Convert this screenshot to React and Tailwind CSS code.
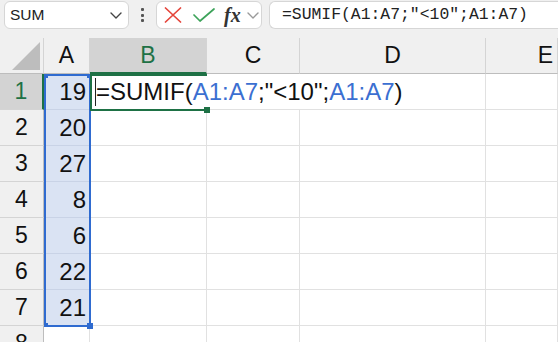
import React from 'react';

const rows = [19, 20, 27, 8, 6, 22, 21];
const cellFont = { fontFamily: '"Liberation Sans", Arial, sans-serif' };

function Chevron({ className }) {
  return (
    <svg className={className} width="12" height="7" viewBox="0 0 12 7" fill="none">
      <path d="M1 1l5 5 5-5" stroke="currentColor" strokeWidth="1.4" strokeLinecap="round" strokeLinejoin="round" />
    </svg>
  );
}

function Toolbar() {
  return (
    <div className="h-[38px] bg-[#f0f0f0] flex items-start pt-px pl-1 gap-0">
      <div className="w-[125px] h-[28px] bg-white border border-[#d6d6d6] rounded-md flex items-center pl-[5px] pr-[6px]">
        <span className="text-[15.5px] text-[#222] flex-1" style={cellFont}>SUM</span>
        <Chevron className="text-[#444]" />
      </div>
      <div className="w-[27px] h-[28px] flex flex-col items-center justify-center gap-[2.5px]">
        <div className="w-[3px] h-[3px] bg-[#555] rounded-[1px]" />
        <div className="w-[3px] h-[3px] bg-[#555] rounded-[1px]" />
        <div className="w-[3px] h-[3px] bg-[#555] rounded-[1px]" />
      </div>
      <div className="w-[106px] h-[28px] bg-white border border-[#d6d6d6] rounded-md flex items-center pl-[6px]">
        <svg width="18" height="16" viewBox="0 0 18 16" className="ml-px">
          <path d="M1.5 1l15 14M16.5 1l-15 14" stroke="#e5453b" strokeWidth="1.7" strokeLinecap="round" />
        </svg>
        <svg width="22" height="14" viewBox="0 0 22 14" className="ml-[11px]">
          <path d="M1 7l6 6L21 1" stroke="#3da35a" strokeWidth="1.7" fill="none" strokeLinecap="round" strokeLinejoin="round" />
        </svg>
        <span className="ml-[9px] text-[20px] italic font-bold text-[#333] leading-none" style={{ fontFamily: '"Liberation Serif", "Times New Roman", serif' }}>fx</span>
        <Chevron className="ml-[6px] text-[#9a9a9a]" />
      </div>
      <div className="ml-[7px] flex-1 h-[28px] bg-white border border-[#d6d6d6] border-r-0 rounded-l-md flex items-center pl-[12px]">
        <span className="text-[16.4px] text-[#222] whitespace-nowrap" style={{ fontFamily: '"Liberation Mono", "Courier New", monospace' }}>
          =SUMIF(A1:A7;"&lt;10";A1:A7)
        </span>
      </div>
    </div>
  );
}

function Sheet() {
  const head = 'bg-[#f0f0f0] border-b border-b-[#bdbdbd] border-r border-r-[#d4d4d4] flex items-center justify-center text-[23px] text-[#111]';
  const rowHead = 'bg-[#f0f0f0] border-r border-r-[#bdbdbd] border-b border-b-[#d4d4d4] flex items-center justify-center text-[23px] text-[#111]';
  const cell = 'border-r border-b border-[#e1e1e1]';
  const aCell = 'bg-[#dae3f3] border-b border-[#c9d3e6] flex items-center justify-end pr-[4px] text-[24px] text-[#111]';

  return (
    <div className="relative grid grid-cols-[44px_46px_117px_93px_186px_72px] grid-rows-[repeat(9,36px)]" style={cellFont}>
      <div className="bg-[#f0f0f0] border-b border-b-[#bdbdbd] border-r border-r-[#d4d4d4] flex items-end justify-end pr-[3px] pb-[3px]">
        <svg width="28" height="28" viewBox="0 0 28 28"><path d="M28 0V28H0z" fill="#bdbdbd" /></svg>
      </div>
      <div className={head}>A</div>
      <div className="bg-[#d3d3d3] border-b-2 border-b-[#1e7145] border-r border-r-[#d4d4d4] flex items-center justify-center text-[23px] text-[#1e7145]">B</div>
      <div className={head}>C</div>
      <div className={head}>D</div>
      <div className={head + ' justify-end pr-[4px]'}>E</div>

      {rows.map((v, i) => (
        <React.Fragment key={i}>
          {i === 0 ? (
            <div className="bg-[#d3d3d3] border-r-2 border-r-[#1e7145] border-b border-b-[#d4d4d4] flex items-center justify-center text-[23px] text-[#1e7145]">1</div>
          ) : (
            <div className={rowHead}>{i + 1}</div>
          )}
          <div className={aCell}>{v}</div>
          {i === 0 ? (
            <div className="col-span-3 border-r border-b border-[#e1e1e1] flex items-center pl-[6px] text-[24px] text-[#111] whitespace-nowrap">
              =SUMIF(<span className="text-[#3b6fd1]">A1:A7</span>;"&lt;10";<span className="text-[#3b6fd1]">A1:A7</span>)
            </div>
          ) : (
            <>
              <div className={cell} />
              <div className={cell} />
              <div className={cell} />
            </>
          )}
          <div className={cell} />
        </React.Fragment>
      ))}

      <div className={rowHead}>8</div>
      <div className={cell} />
      <div className={cell} />
      <div className={cell} />
      <div className={cell} />
      <div className={cell} />

      {/* range highlight A1:A7 */}
      <div className="absolute left-[44px] top-[36px] w-[47px] h-[253px] border-2 border-[#2f6bd0] pointer-events-none">
        <div className="absolute -left-[2px] -top-[2px] w-[4px] h-[4px] bg-[#2f6bd0]" />
        <div className="absolute -right-[2px] -top-[2px] w-[4px] h-[4px] bg-[#2f6bd0]" />
        <div className="absolute -left-[2px] -bottom-[2px] w-[4px] h-[4px] bg-[#2f6bd0]" />
        <div className="absolute -right-[4px] -bottom-[4px] w-[6px] h-[6px] bg-[#2f6bd0]" />
      </div>

      {/* active cell B1 */}
      <div className="absolute left-[90px] top-[36px] w-[117px] h-[37px] border-2 border-r-0 border-[#1e7145] pointer-events-none">
        <div className="absolute left-[3px] top-[2px] w-px h-[28px] bg-[#222]" />
        <div className="absolute -right-[3px] -bottom-[4px] w-[6px] h-[6px] bg-[#1e7145]" />
      </div>
    </div>
  );
}

export default function App() {
  return (
    <div className="w-[558px] h-[342px] overflow-hidden bg-white">
      <Toolbar />
      <Sheet />
    </div>
  );
}
